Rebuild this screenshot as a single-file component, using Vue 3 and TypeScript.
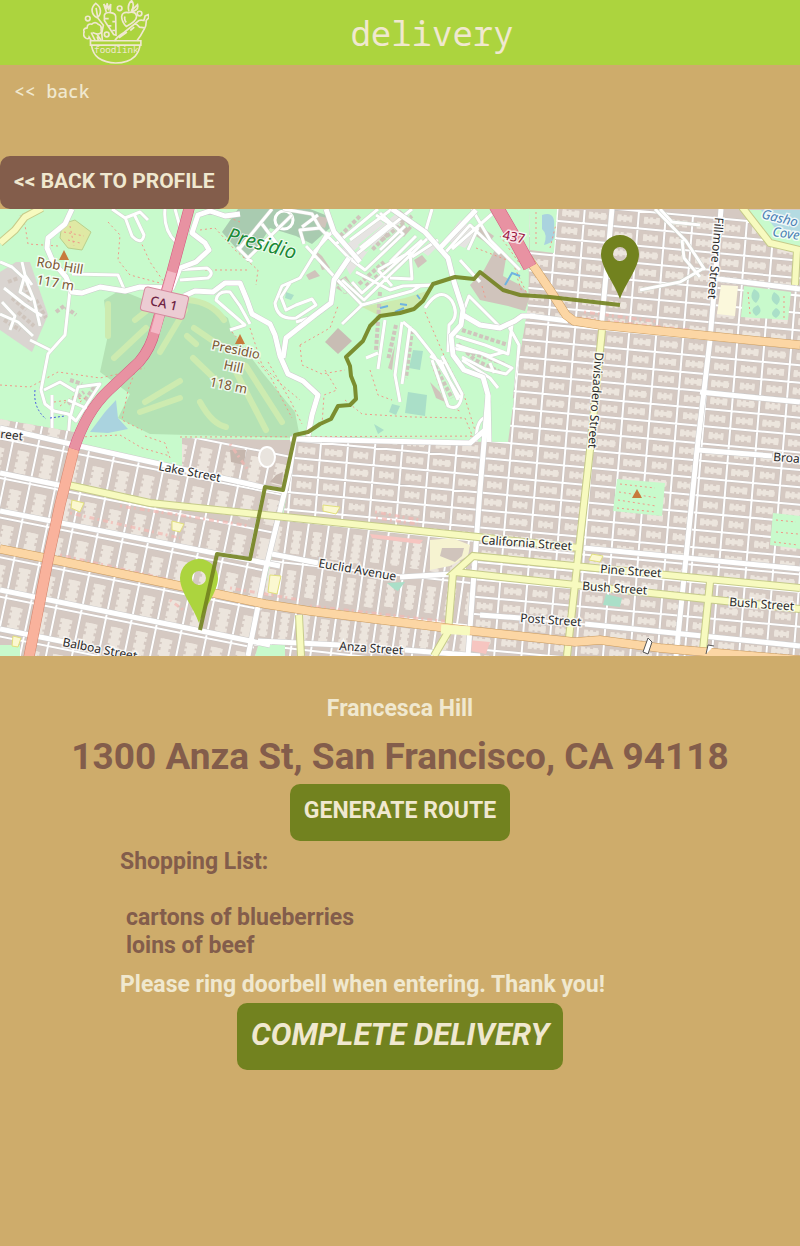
<script setup lang="ts">
type Point = [number, number]

interface Grid {
  id: string
  clip: string
  origin: Point
  u: Point
  v: Point
  cols: number
  rows: number
  along: 'u' | 'v'
}

interface Label {
  text: string
  x: number
  y: number
  angle: number
  size?: number
  kind?: string
}

const grids: Grid[] = [
  {
    id: 'west',
    clip: '0,419 75,432 73,448 182,466 182,438 296,440 283,490 272,545 256,656 0,656',
    origin: [-54, 388],
    u: [25, 5],
    v: [-8, 38],
    cols: 18,
    rows: 8,
    along: 'v',
  },
  {
    id: 'east',
    clip: '283,516 296,440 505,442 514,390 528,305 530,209 800,209 800,656 466,656 478,538',
    origin: [261, 176],
    u: [27, 2.5],
    v: [-1.4, 17.3],
    cols: 23,
    rows: 29,
    along: 'u',
  },
  {
    id: 'middle',
    clip: '280,515 478,538 466,656 252,656',
    origin: [255, 474],
    u: [20, 2.2],
    v: [-6, 42],
    cols: 13,
    rows: 5,
    along: 'v',
  },
]

function at(g: Grid, i: number, j: number): string {
  const x = g.origin[0] + g.u[0] * i + g.v[0] * j
  const y = g.origin[1] + g.u[1] * i + g.v[1] * j
  return `${x.toFixed(1)} ${y.toFixed(1)}`
}

function streets(g: Grid): string {
  let d = ''
  for (let i = 0; i <= g.cols; i++) d += `M${at(g, i, 0)}L${at(g, i, g.rows)}`
  for (let j = 0; j <= g.rows; j++) d += `M${at(g, 0, j)}L${at(g, g.cols, j)}`
  return d
}

function yards(g: Grid): string {
  let d = ''
  for (let i = 0; i < g.cols; i++) {
    for (let j = 0; j < g.rows; j++) {
      const inset = 0.17 + ((i * 7 + j * 5) % 4) * 0.02
      d +=
        g.along === 'u'
          ? `M${at(g, i + inset, j + 0.5)}L${at(g, i + 1 - inset, j + 0.5)}`
          : `M${at(g, i + 0.5, j + inset)}L${at(g, i + 0.5, j + 1 - inset)}`
    }
  }
  return d
}

const drawn = grids.map((g) => ({ ...g, streets: streets(g), yards: yards(g) }))

const parkRoads: string[] = [
  'M72 209L65 224L48 238L47 248L53 262L66 277L72 292L82 293L100 287L125 291L140 287L172 288L180 268L196 262L209 250L205 243L192 233L198 215L210 211L225 216L240 214',
  'M184 296L195 291L213 292L225 283L240 283L247 300L252 314L270 324L275 335L280 356L288 374L303 381L318 395L312 415L308 436',
  'M283 358L286 338L315 315L331 303L334 280L349 258',
  'M326 209L334 232L360 262',
  'M392 209L425 232L448 258L454 282L463 310L461 325L451 336L453 355L464 370L483 377L488 395L489 442',
  'M440 248L455 232L476 210',
  'M463 315L480 325L500 328L515 321L522 316L535 316',
]

const parkLanes: string[] = [
  'M70 290L65 335L48 354L41 390L45 404L54 411L68 414L76 421L100 384L78 387L70 418M44 390L60 382L75 391M68 400L90 410M52 395L52 440M70 415L68 440',
  'M72 274L118 275L124 289M175 270L207 268Q215 273 208 278L180 280M0 262L12 267L26 280L34 300L40 326M4 288L24 304L42 316M0 314L18 322L33 336M2 302L15 316L10 330M24 278L20 292L32 300M22 262L25 275L32 285',
  'M112 209L125 218L140 212L148 220M125 217L132 236Q142 246 144 235L134 214M165 209Q163 230 176 242M175 209L182 234',
  'M230 330L245 325L216 300Q218 290 230 292L240 306L250 324M30 340L50 350',
  'M240 248L272 209M246 260L292 215M237 247L252 262M262 224L280 248M283 209L312 214L320 228L300 230L304 244M302 227L318 215',
  'M328 232L300 278L282 286L275 303Q277 320 296 318L316 305L312 299L296 305L286 310L281 297L290 283M316 316L296 322M306 246L343 286M320 228L349 258L365 270L403 234L380 213M336 244L378 209M352 258L412 209M314 252L332 232M328 270L362 305M342 280L364 300L430 236M352 282L362 293L422 240M356 272L390 290L403 286L432 285M342 324L362 305L412 291L420 286L432 285M378 270L410 252L412 279L390 278M378 270L392 286M412 257L438 240',
  'M376 215L390 224L360 248M350 240L392 209M405 226L380 250M416 236L390 262M432 209L425 233M444 254L470 225L500 254M452 249L492 214M478 228L468 250M460 260L480 282M472 209L490 240L512 262L520 270',
  'M385 320L378 369M366 358L378 353M402 322L395 375L400 402M410 326L402 384M403 322L415 332L434 356L460 398M432 360L448 406Q460 412 462 394L442 356M440 360L458 400M444 364L430 356',
  'M456 336L485 345L508 354L512 325M456 345L490 356L504 352M452 348L480 353L512 368L506 374L485 369L462 357M462 360L490 378L498 388M463 312L469 296L500 327M425 308Q440 285 452 301Q460 316 449 325L448 352M509 327L519 345L515 398M489 417Q476 416 476 442M490 363L494 373',
]

const footpaths: string[] = [
  'M0 385L30 387L58 372L100 378L145 368M58 246L28 244L25 225L20 215M108 222L120 235L118 260L130 275L160 283M140 240L150 262L164 282M145 345L128 390L122 420L142 430',
  'M200 230L215 228L235 250L258 270L256 285M205 270L250 270M215 212L240 222M250 328L262 365L282 385L300 400M232 332L270 376L292 418',
  'M268 362L290 400L302 424M300 345L330 328L338 306M300 345L302 365L322 374L345 370M325 370L337 390L324 395L322 425M345 400L362 414L412 417L465 418L475 442M425 312L446 360L464 395L478 440M370 370L378 395L392 400M432 365L446 405L462 412',
  'M80 437L120 435L142 448L170 456M145 436L165 443L170 458M180 437L505 436M225 446L232 460M240 442L250 462',
  'M532 212L532 245L552 250L556 215M476 248L512 262L530 300M500 236L520 264',
  'M64 232L84 236M68 240L80 243M70 226L74 246M54 402L84 398M60 406L74 396M80 402L88 396M482 286L486 300M520 246L524 262M516 274L522 292',
]

const greens: string[] = [
  '104,300 120,290 145,300 200,300 228,318 232,332 262,372 295,412 300,438 150,434 118,418 130,394 100,372 108,335',
]

const fairways: string[] = [
  'M108 304L108 336M114 358L146 328M135 320L150 308M145 402L180 381M140 412L180 398M160 352L185 310M188 300Q212 302 224 320M194 328L216 343M193 358L218 382M187 336L196 344M200 402Q212 424 226 427M236 372L266 430M246 366L282 422',
]

const majorRoads: string[] = [
  'M0 428L75 445L262 487L283 491M0 473L68 487M0 511L280 566M0 590L270 645M0 629L70 643',
  'M295 435L290 470L265 572L248 656M290 439L470 443L485 430M488 395L480 490L468 656',
  'M612 209L601 330M721 209L710 340L697 450L676 656M272 554L318 563M400 577L453 574',
  'M530 316L568 321M710 278L800 289M700 392L800 402M698 450L772 456M584 548L800 569M480 615L520 618M585 624L800 646M258 641L340 645M405 650L480 656',
]

const diagonals =
  'M655 209L686 241L705 270M660 209L672 222L700 225M682 240L684 258L700 277M704 268L680 282L640 290'

const yellowRoads =
  'M0 243L15 230L25 217L42 208M68 485L150 503L265 515L478 537L580 548M602 330L590 450L567 656M800 588L473 556L455 572L800 609M453 573L448 632L434 656M710 582L703 650M299 615L301 656M742 207L770 243L800 250M797 250L795 285'

const orangeRoads =
  'M0 549L60 561L180 586L265 604L310 611L455 629L575 642L600 640L660 648L740 655L800 660M528 258L550 290L566 315L574 321L600 325L710 336L800 345'

const highway = 'M190 205L172 272L155 330Q151 348 139 362L108 391Q86 412 74 449'
const parkway = 'M493 201L512 234L530 267'
const boulevard = 'M74 449L60 505L48 560L28 662'

const labels: Label[] = [
  { text: 'Presidio', x: 226, y: 241, angle: 15, size: 20, kind: 'park' },
  { text: 'Rob Hill', x: 36, y: 266, angle: 10, size: 13, kind: 'hill' },
  { text: '117 m', x: 36, y: 284, angle: 10, size: 13, kind: 'hill' },
  { text: 'Presidio', x: 211, y: 349, angle: 12, size: 13, kind: 'hill' },
  { text: 'Hill', x: 223, y: 369, angle: 12, size: 13, kind: 'hill' },
  { text: '118 m', x: 209, y: 386, angle: 12, size: 13, kind: 'hill' },
  { text: '437', x: 502, y: 239, angle: 12, size: 13, kind: 'shield' },
  { text: 'reet', x: 0, y: 438, angle: 6 },
  { text: 'Lake Street', x: 158, y: 470, angle: 11 },
  { text: 'California Street', x: 481, y: 544, angle: 4 },
  { text: 'Euclid Avenue', x: 318, y: 567, angle: 10 },
  { text: 'Pine Street', x: 600, y: 573, angle: 4 },
  { text: 'Bush Street', x: 582, y: 590, angle: 4 },
  { text: 'Bush Street', x: 729, y: 606, angle: 4 },
  { text: 'Post Street', x: 520, y: 622, angle: 4 },
  { text: 'Anza Street', x: 339, y: 650, angle: 4 },
  { text: 'Balboa Street', x: 62, y: 646, angle: 11 },
  { text: 'Broa', x: 773, y: 461, angle: 4 },
  { text: 'Fillmore Street', x: 715, y: 217, angle: 95 },
  { text: 'Divisadero Street', x: 595, y: 352, angle: 94 },
  { text: 'Gasho', x: 761, y: 218, angle: 14, size: 13, kind: 'water' },
  { text: 'Cove', x: 772, y: 236, angle: 8, size: 13, kind: 'water' },
]

const pin =
  'M0 0C-5 -15 -19 -31 -19 -45A19 19 0 0 1 19 -45C19 -31 5 -15 0 0ZM-7 -45A7 7 0 1 0 7 -45A7 7 0 1 0 -7 -45Z'

const route =
  'M200 630L217 554L250 559L265 487L283 490L295 435L308 432L320 424L331 419L338 406L350 405L356 399L355 386L351 376L350 366L346 357L363 341L370 326L380 316L400 313L414 309L423 301L433 284L455 277L474 279L480 272L503 290L520 295L550 297L620 305'

const items: string[] = ['cartons of blueberries', 'loins of beef']
</script>

<template>
  <div class="page">
    <header class="bar">
      <svg class="logo" viewBox="42 0 198 196" role="img" aria-label="foodlink">
        <path d="M64 123H216V136H64ZM67 137Q72 164 88 175Q110 190 140 190Q178 190 198 170Q212 154 213 137" />
        <path d="M84 54C64 42 65 22 80 10C98 22 98 42 84 54M81 24L86 54L103 76L98 100L100 122" />
        <path d="M106 45Q109 36 124 38Q140 40 140 50L141 106L134 104L106 62ZM112 36L104 12L113 24L114 10L119 26L125 12L124 36M108 56H119M130 65H140M118 78H127M130 92H138" />
        <path d="M158 50Q160 35 178 38Q199 33 203 48Q205 62 172 80Q158 66 158 50ZM180 34Q174 14 188 2Q199 14 187 33L206 14Q210 30 190 35M168 50Q165 60 172 68" />
        <path d="M66 122L60 112Q58 120 50 115Q40 108 45 96Q40 86 54 84Q54 70 68 73Q78 64 87 73Q99 76 96 90Q100 102 84 103L96 122M66 98L78 122M84 103L70 98M84 110L88 122" />
        <path d="M136 124Q145 110 165 98L205 66Q212 58 225 62L229 48L238 44L240 53L232 62Q233 78 226 88Q215 110 204 123M200 70L212 82L228 84M150 114L174 97M184 92L196 82" />
        <circle cx="56" cy="56" r="7" />
        <circle cx="152" cy="25" r="7" />
        <circle cx="212" cy="41" r="7" />
        <circle cx="113" cy="104" r="7" />
        <text x="75" y="161">foodlink</text>
      </svg>
      <h1 class="title">delivery</h1>
    </header>

    <nav class="crumbs">
      <a class="back" href="#">&lt;&lt; back</a>
    </nav>

    <button class="btn profile" type="button">&lt;&lt; BACK TO PROFILE</button>

    <svg class="map" viewBox="0 209 800 447" role="img" aria-label="Delivery route map">
      <defs>
        <clipPath v-for="g in drawn" :id="g.id" :key="g.id">
          <polygon :points="g.clip" />
        </clipPath>
      </defs>

      <rect x="0" y="209" width="800" height="447" fill="#c8facc" />
      <polygon points="0,272 16,262 30,262 48,315 32,352 0,330" fill="#dad5d1" />
      <polygon v-for="p in greens" :key="p" :points="p" fill="#b4e2b4" />
      <polygon points="222,232 238,209 310,209 328,216 330,228 312,244 296,236 270,228 248,262" fill="#a9cbb0" />
      <circle cx="284" cy="220" r="9" fill="none" stroke="#ffffff" stroke-width="3" />
      <path v-for="f in fairways" :key="f" :d="f" class="fairway" />
      <path d="M62 224L75 220L91 232L82 250L68 248L60 238Z" fill="#dfe9a4" stroke="#b9cf8c" />
      <path d="M90 432L105 412L116 400L118 418L128 429L108 433Z" fill="#aad3df" />
      <path d="M380 316L362 307L405 298L430 290L423 301L414 309Z" fill="#cdebb0" />
      <path d="M325 342L338 328L352 341L338 354Z" fill="#c8bdb4" />
      <path d="M413 350L423 351L420 370L409 368ZM408 392L427 395L425 416L405 413ZM392 404L400 406L396 415L389 412ZM374 424L384 430L378 434ZM286 292L294 295L291 300L285 298Z" fill="#aadfc8" />
      <path d="M345 265L366 240L372 246L350 275ZM445 240L460 220L478 232L465 248ZM358 245L398 212L404 220L366 252ZM340 250L378 218L384 224L348 256ZM420 250L432 240L438 246L428 256Z" fill="#e6e4e2" />
      <path
        d="M484 270L496 248L506 258L503 276L520 285L530 296L525 311L508 306L480 300L470 285ZM336 288L344 278L353 286L346 294ZM306 275L315 270L320 276L309 280ZM315 250L322 256L330 268L322 270ZM336 282L346 276L354 288L344 294ZM414 260L422 255L427 261L418 268ZM395 230L405 222L412 228L404 237ZM318 216L328 218L325 228L315 224ZM395 345L392 370L388 368ZM430 382L440 392L445 402L436 398ZM400 210L412 220L408 228L398 220ZM480 226L494 236L488 244L476 236Z"
        fill="#d0c4bc"
      />
      <path d="M462 330L508 345M466 351L505 364M458 344L475 360L500 372M350 292L384 262M366 286L402 254M380 292L376 350M396 325L388 360M412 330L406 378M435 366L452 398M462 306L456 285M70 380L82 384M68 404L84 392M85 400L95 386M56 312L64 306L76 315M382 240L412 216M398 262L420 244M340 236L360 216M388 234L372 250" class="houses" />
      <path d="M8 282L18 278M12 298L26 310M26 286L30 302M36 300L46 318M4 320L20 330M18 312L34 326" class="houses" />
      <path v-for="f in footpaths" :key="f" :d="f" class="foot" />
      <path v-for="r in parkLanes" :key="r" :d="r" class="lane-case" />
      <path v-for="r in parkLanes" :key="r" :d="r" class="lane" />

      <g v-for="g in drawn" :key="g.id" :clip-path="`url(#${g.id})`">
        <polygon :points="g.clip" fill="#d5c9c2" />
        <path :d="g.yards" class="yard" :class="g.id" />
        <path :d="g.yards" class="yard edge" :class="g.id" />
        <path :d="g.streets" class="street-case" />
        <path :d="g.streets" class="street" />
      </g>

      <path d="M530 209H557L554 253L530 250Z" fill="#c8facc" />
      <path d="M542 215Q556 210 554 228Q558 242 544 245Q548 234 542 229Z" fill="#aad3df" />
      <path d="M742 209H800V248L772 245Z" fill="#c8facc" />
      <path d="M760 209H800V234L775 228Z" fill="#b4dbe2" />
      <path d="M744 286L791 292L788 320L741 317Z" fill="#c8facc" />
      <path d="M754 289Q764 294 756 303Q748 298 754 289ZM774 292Q784 298 777 305Q768 300 774 292ZM758 305Q764 312 756 316Q748 310 758 305ZM776 308Q784 312 776 318Q768 314 776 308Z" fill="#aadfc8" />
      <path d="M721 285L738 286L735 316L717 314Z" fill="#fbf8dc" />
      <path d="M617 479L665 483L662 516L613 511Z" fill="#c8facc" />
      <path d="M773 513L800 516V549L770 545Z" fill="#c8facc" />
      <path d="M488 440V412L514 398L508 442Z" fill="#c8facc" />
      <path d="M606 594L622 598L620 607L603 605Z" fill="#aadfc8" />
      <path d="M387 583L405 582L398 591L394 589Z" fill="#aadfc8" />
      <path d="M0 645H20V656H0ZM258 646L285 644V656H255Z" fill="#c8facc" />
      <path d="M430 540L452 538L470 545L468 556L450 566L430 570Z" fill="#f6f3d1" />
      <path d="M442 548L464 548L462 556L455 562L440 556Z" fill="#d0c4bc" />
      <path d="M230 450L246 450L244 465L231 462ZM276 475L283 472L282 485L270 482Z" fill="#c5b6ad" />
      <path d="M370 534L423 540L420 544L372 538Z" fill="#f6c5c0" />
      <path d="M468 640L490 642L486 654L466 650Z" fill="#f6c5c0" />
      <path d="M72 500L84 503L80 512L71 508ZM172 521L184 524L180 532L172 530ZM270 575L281 576L277 594L268 592ZM592 554L603 556L600 562L589 560ZM323 505L340 507L336 514L323 511ZM13 636L21 638L18 647L12 646Z" class="school" />
      <path d="M620 484L655 488M619 492L658 498M618 500L656 506M617 508L656 512M776 520L796 522M776 532L798 534M774 542L798 545M748 292L750 314M784 296L784 318M536 212V246M550 248L556 224" class="foot" />
      <path d="M375 512L420 520M376 518L418 524M580 318L690 330M584 312L660 322M700 334L790 345M70 513L180 538M120 506L250 526M60 555L170 580M230 588L300 600M310 606L450 622M500 636L560 642M170 600L186 612M230 444L248 470" class="shops" />
      <ellipse cx="267" cy="457" rx="8" ry="10" fill="#e9e4de" stroke="#ffffff" stroke-width="2" />

      <path d="M570 209L800 209" stroke="#d5c9c2" stroke-width="2" />
      <g class="major-case">
        <path v-for="r in majorRoads" :key="r" :d="r" />
        <path v-for="r in parkRoads" :key="r" :d="r" />
      </g>
      <path :d="diagonals" class="lane-case" />
      <path :d="diagonals" class="lane" />
      <g class="major">
        <path v-for="r in majorRoads" :key="r" :d="r" />
        <path v-for="r in parkRoads" :key="r" :d="r" />
      </g>

      <path :d="yellowRoads" class="yellow-case" />
      <path :d="yellowRoads" class="yellow" />
      <path :d="orangeRoads" class="orange-case" />
      <path :d="orangeRoads" class="orange" />
      <path d="M441 629L470 631" stroke="#f7fabf" stroke-width="9" />
      <path :d="boulevard" class="salmon-case" />
      <path :d="boulevard" class="salmon" />
      <path :d="highway" class="red-case" />
      <path :d="highway" class="red" />
      <path :d="parkway" class="red-case wide" />
      <path :d="parkway" class="red wide" />
      <path d="M172 272L155 333" stroke="#f3b9c6" stroke-width="9" />
      <path d="M35 390Q33 408 46 419M50 418L65 416" class="bay" />
      <path d="M380 308L388 306M395 312L404 308M400 304L407 305M417 295L420 299M505 285L512 273L520 276" stroke="#6fb3e0" stroke-width="2" fill="none" />
      <path d="M643 652L648 638L652 642L648 654ZM706 654L708 645L714 646" fill="#ffffff" stroke="#555555" />
      <path d="M64 250L69 260H59ZM240 334L245 344H235ZM637 489L642 498H632Z" fill="#c77b3c" />

      <g transform="rotate(13 164 303)">
        <rect x="142" y="291" width="45" height="24" rx="3" fill="#ecccd3" stroke="#d58a9e" />
        <text x="164" y="308" class="ca">CA 1</text>
      </g>
      <text
        v-for="(l, i) in labels"
        :key="i"
        class="label"
        :class="l.kind"
        :font-size="l.size ?? 12"
        :transform="`translate(${l.x} ${l.y}) rotate(${l.angle})`"
      >{{ l.text }}</text>

      <path :d="pin" transform="translate(199 623)" fill="#acd43e" fill-rule="evenodd" />
      <path :d="pin" transform="translate(620 299)" fill="#72821f" fill-rule="evenodd" />
      <path :d="route" class="route" />
    </svg>

    <main class="details">
      <p class="name">Francesca Hill</p>
      <h2 class="address">1300 Anza St, San Francisco, CA 94118</h2>
      <button class="btn generate" type="button">GENERATE ROUTE</button>
      <section class="order">
        <h3 class="heading">Shopping List:</h3>
        <ul class="items">
          <li v-for="item in items" :key="item">{{ item }}</li>
        </ul>
        <p class="note">Please ring doorbell when entering. Thank you!</p>
      </section>
      <button class="btn complete" type="button">COMPLETE DELIVERY</button>
    </main>
  </div>
</template>

<style>
body {
  margin: 0;
  background: #ceac6b;
}
</style>

<style scoped>
.page {
  min-height: 100vh;
  background: #ceac6b;
  color: #f0e8cf;
  font-family: Roboto, sans-serif;
  font-weight: 700;
}
.bar {
  display: grid;
  grid-template-columns: 29% 50%;
  align-items: center;
  justify-items: center;
  height: 65px;
  background: #acd43e;
}
.logo {
  width: 66px;
  height: 65px;
  fill: none;
  stroke: #f0e8cf;
  stroke-width: 5;
}
.logo text {
  fill: #f0e8cf;
  stroke: none;
  font: 400 28px "Noto Sans Mono", "DejaVu Sans Mono", monospace;
}
.title {
  margin: 0;
  font: 400 34px/40px "Droid Sans Mono", "Noto Sans Mono", "DejaVu Sans Mono", monospace;
}
.crumbs {
  height: 63px;
  padding: 14px 14px;
}
.back {
  color: inherit;
  text-decoration: none;
  font: 500 18px/24px "Droid Sans Mono", "Noto Sans Mono", "DejaVu Sans Mono", monospace;
}
.btn {
  display: block;
  border: 0;
  border-radius: 10px;
  color: #f0e8cf;
  background: #72821f;
  font-family: inherit;
  font-weight: 700;
  cursor: pointer;
}
.profile {
  padding: 12px 15px 15px 14px;
  background: #835d4b;
  font-size: 21px;
  line-height: 26px;
}
.map {
  display: block;
  width: 100%;
  height: auto;
}
.map path {
  fill-rule: evenodd;
}
.fairway {
  fill: none;
  stroke: #cdebb0;
  stroke-width: 6;
  stroke-linecap: round;
}
.houses {
  fill: none;
  stroke: #cfc5bd;
  stroke-width: 4;
  stroke-dasharray: 4 2;
}
.foot {
  fill: none;
  stroke: #f0998a;
  stroke-width: 1;
  stroke-dasharray: 2 3;
}
.lane-case {
  fill: none;
  stroke: #cfd5cc;
  stroke-width: 4;
  stroke-linejoin: round;
}
.lane {
  fill: none;
  stroke: #ffffff;
  stroke-width: 3;
  stroke-linejoin: round;
}
.yard {
  fill: none;
  stroke: #ece5dd;
  stroke-width: 4;
}
.yard.edge {
  stroke-width: 7;
  stroke-dasharray: 4 2 3 3 5 2;
}
.yard.west {
  stroke-width: 8;
}
.yard.edge.west {
  stroke-width: 12;
}
.yard.middle {
  stroke-width: 6;
}
.yard.edge.middle {
  stroke-width: 9;
}
.street-case {
  fill: none;
  stroke: #c9c3c0;
  stroke-width: 3;
}
.street {
  fill: none;
  stroke: #ffffff;
  stroke-width: 2;
}
.major-case {
  fill: none;
  stroke: #cccccc;
  stroke-width: 6;
  stroke-linejoin: round;
}
.major {
  fill: none;
  stroke: #ffffff;
  stroke-width: 5;
  stroke-linejoin: round;
}
.yellow-case {
  fill: none;
  stroke: #c6cb8a;
  stroke-width: 8;
}
.yellow {
  fill: none;
  stroke: #f7fabf;
  stroke-width: 6;
}
.orange-case {
  fill: none;
  stroke: #c99a5d;
  stroke-width: 9;
}
.orange {
  fill: none;
  stroke: #fcd6a4;
  stroke-width: 8;
}
.salmon-case {
  fill: none;
  stroke: #d3846d;
  stroke-width: 11;
}
.salmon {
  fill: none;
  stroke: #f9b29c;
  stroke-width: 10;
}
.red-case {
  fill: none;
  stroke: #d3567f;
  stroke-width: 11;
}
.red {
  fill: none;
  stroke: #e892a2;
  stroke-width: 10;
}
.red-case.wide {
  stroke-width: 14;
}
.red.wide {
  stroke-width: 13;
}
.bay {
  fill: none;
  stroke: #4a5fe0;
  stroke-width: 1;
  stroke-dasharray: 2 2;
}
.school {
  fill: #fbf8d0;
  stroke: #e2e07c;
}
.shops {
  fill: none;
  stroke: #f3b8b2;
  stroke-width: 3;
  stroke-dasharray: 2 4 5 3;
  opacity: 0.7;
}
.ca {
  fill: #6f2443;
  font: 500 13px "Noto Sans", sans-serif;
  text-anchor: middle;
}
.label {
  fill: #2b2b2b;
  font-family: "Noto Sans", sans-serif;
  font-weight: 400;
  paint-order: stroke;
  stroke: rgba(255, 255, 255, 0.75);
  stroke-width: 3px;
}
.label.park {
  fill: #1b8a36;
  font-style: italic;
  stroke-width: 2px;
}
.label.hill {
  fill: #7a5632;
}
.label.shield {
  fill: #9a1742;
}
.label.water {
  fill: #4a7fb5;
  font-style: italic;
}
.route {
  fill: none;
  stroke: #72821f;
  stroke-width: 4;
  stroke-linejoin: round;
  opacity: 0.9;
}
.details {
  display: flex;
  flex-direction: column;
  align-items: center;
  padding: 39px 0 40px;
}
.name,
.heading,
.note {
  margin: 0;
  font-size: 23px;
  font-weight: 700;
  line-height: 28px;
}
.address {
  margin: 12px 0 5px;
  color: #835d4b;
  font-size: 37px;
  line-height: 44px;
}
.generate {
  padding: 13px 14px 16px;
  font-size: 23px;
  line-height: 28px;
}
.order {
  box-sizing: border-box;
  width: 100%;
  padding: 7px 15% 4px;
}
.heading {
  color: #835d4b;
}
.items {
  margin: 28px 0 11px;
  padding: 0 0 0 6px;
  color: #835d4b;
  font-size: 23px;
  line-height: 28px;
  list-style: none;
}
.complete {
  padding: 13px 14px 16px;
  font-size: 31px;
  font-style: italic;
  line-height: 38px;
}
</style>
